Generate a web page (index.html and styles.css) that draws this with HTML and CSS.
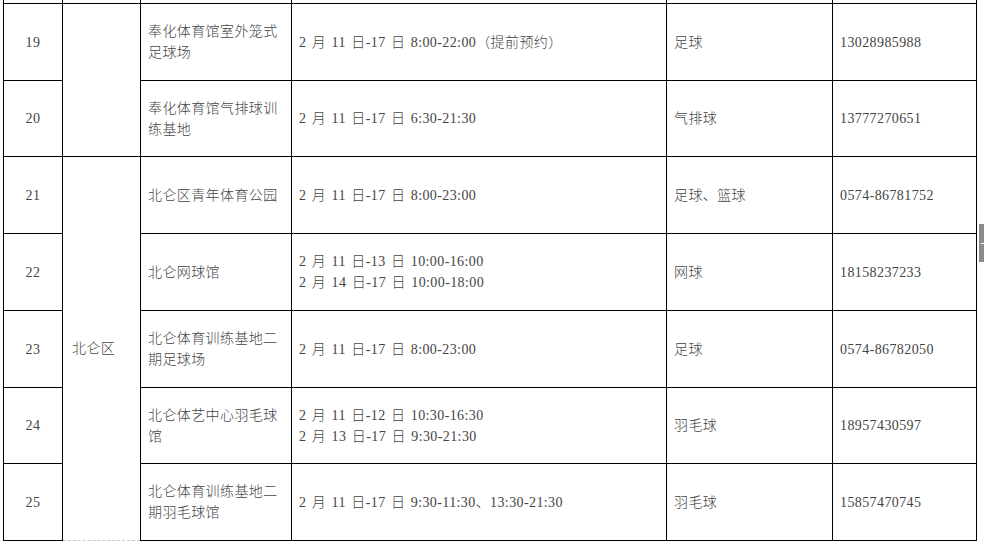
FILE: index.html
```html
<!DOCTYPE html>
<html lang="zh-CN">
<head>
<meta charset="utf-8">
<title>开放场馆</title>
<link rel="stylesheet" href="styles.css">
</head>
<body>
<div class="page">
  <table class="schedule">
    <colgroup>
      <col class="c-no"><col class="c-dist"><col class="c-venue"><col class="c-time"><col class="c-sport"><col class="c-phone">
    </colgroup>
    <tr class="cut"><td></td><td></td><td></td><td></td><td></td><td></td></tr>
    <tr class="r77">
      <td class="no">19</td>
      <td class="dist" rowspan="2"></td>
      <td>奉化体育馆室外笼式足球场</td>
      <td>2 月 11 日-17 日 8:00-22:00（提前预约）</td>
      <td>足球</td>
      <td>13028985988</td>
    </tr>
    <tr class="r76">
      <td class="no">20</td>
      <td>奉化体育馆气排球训练基地</td>
      <td>2 月 11 日-17 日 6:30-21:30</td>
      <td>气排球</td>
      <td>13777270651</td>
    </tr>
    <tr class="r77">
      <td class="no">21</td>
      <td class="dist last" rowspan="5">北仑区</td>
      <td>北仑区青年体育公园</td>
      <td>2 月 11 日-17 日 8:00-23:00</td>
      <td>足球、篮球</td>
      <td>0574-86781752</td>
    </tr>
    <tr class="r77">
      <td class="no">22</td>
      <td>北仑网球馆</td>
      <td>2 月 11 日-13 日 10:00-16:00<br>2 月 14 日-17 日 10:00-18:00</td>
      <td>网球</td>
      <td>18158237233</td>
    </tr>
    <tr class="r77">
      <td class="no">23</td>
      <td>北仑体育训练基地二期足球场</td>
      <td>2 月 11 日-17 日 8:00-23:00</td>
      <td>足球</td>
      <td>0574-86782050</td>
    </tr>
    <tr class="r76">
      <td class="no">24</td>
      <td>北仑体艺中心羽毛球馆</td>
      <td>2 月 11 日-12 日 10:30-16:30<br>2 月 13 日-17 日 9:30-21:30</td>
      <td>羽毛球</td>
      <td>18957430597</td>
    </tr>
    <tr class="r77">
      <td class="no">25</td>
      <td>北仑体育训练基地二期羽毛球馆</td>
      <td>2 月 11 日-17 日 9:30-11:30、13:30-21:30</td>
      <td>羽毛球</td>
      <td>15857470745</td>
    </tr>
  </table>
  <div class="scroll-mark"></div>
</div>
</body>
</html>
```

FILE: styles.css
```css
html, body {
  margin: 0;
  padding: 0;
  background: #fff;
}

.page {
  position: relative;
  width: 984px;
  height: 545px;
  overflow: hidden;
}

.schedule {
  border-collapse: collapse;
  table-layout: fixed;
  width: 973px;
  margin-left: 3px;
  font-family: "Liberation Serif", "Noto Sans CJK SC", serif;
  font-size: 14px;
  font-weight: 300;
  letter-spacing: 0.4px;
  word-spacing: 1.5px;
  line-height: 21px;
  color: #444;
}

.c-no { width: 59px; }
.c-dist { width: 78px; }
.c-venue { width: 151px; }
.c-time { width: 375px; }
.c-sport { width: 166px; }
.c-phone { width: 144px; }

.schedule td {
  border: 1px solid #000;
  padding: 0 7px;
  vertical-align: middle;
  text-align: left;
  word-break: break-all;
}

.schedule td.no {
  text-align: center;
  padding: 0;
}

.schedule td.dist {
  padding-left: 9px;
}

.schedule td.last {
  border-bottom: 1px dashed #c8c8c8;
}

.schedule tr.cut td {
  border-top: none;
  height: 3px;
  padding: 0;
}

.schedule tr.r77 td { height: 76px; }
.schedule tr.r76 td { height: 75px; }

.scroll-mark {
  position: absolute;
  left: 979px;
  top: 224px;
  width: 5px;
  height: 38px;
  background: #8c8c8c;
}

.scroll-mark::after {
  content: "";
  position: absolute;
  left: 2px;
  top: 19px;
  width: 3px;
  height: 1px;
  background: #fff;
}
```
